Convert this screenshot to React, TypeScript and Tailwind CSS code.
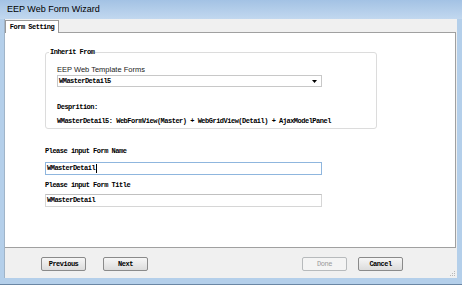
import React from "react";

function Btn({ label, disabled }: { label: string; disabled?: boolean }) {
  return (
    <div
      className={
        "w-[45px] h-[14px] flex items-center justify-center rounded-[2px] border font-['Liberation_Mono',monospace] text-[7px] tracking-[-0.5px] " +
        (disabled
          ? "border-[#b7babc] bg-[#f4f4f4] text-[#9a9a9a]"
          : "border-[#8a8a8a] bg-gradient-to-b from-[#f6f6f6] to-[#dcdcdc] text-black font-bold")
      }
    >
      {label}
    </div>
  );
}

export default function App() {
  return (
    <div className="w-[462px] h-[285px] flex flex-col bg-[#b4cfea] overflow-hidden font-['Liberation_Mono',monospace]">
      {/* title bar */}
      <div className="h-[19px] shrink-0 bg-gradient-to-b from-[#a3c2e4] to-[#c2d8ef] flex items-center pl-[7px] pt-[1px]">
        <span className="font-['Liberation_Sans',sans-serif] text-[9px] text-black">EEP Web Form Wizard</span>
      </div>
      {/* body */}
      <div className="flex-1 ml-[4px] mr-[5px] mb-[6px] bg-[#f0f0f0] border-l border-[#a0b4c8] flex flex-col">
        {/* tab strip */}
        <div className="h-[13px] shrink-0 flex items-end">
          <div className="h-[13px] w-[54px] bg-white border border-b-0 border-[#9a9a9a] flex items-center justify-center text-[7px] tracking-[-0.5px] text-black font-bold relative top-[1px]">
            Form Setting
          </div>
        </div>
        {/* panel */}
        <div className="h-[216px] shrink-0 mr-[1px] bg-white border border-[#a0a0a0] border-l-0 pl-[40px] pt-[19px]">
          {/* group box */}
          <div className="relative w-[332px] h-[77px] border border-[#dcdcdc] rounded-[3px] pl-[11px] pt-[12px]">
            <div className="absolute left-[3px] top-[-5px] bg-white px-[1px] text-[7px] tracking-[-0.5px] font-bold text-black leading-[9px]">
              Inherit From
            </div>
            <div className="font-['Liberation_Sans',sans-serif] text-[7.5px] leading-[9px] text-[#222]">EEP Web Template Forms</div>
            <div className="mt-[1px] w-[265px] h-[12px] border border-[#c8c8c8] flex items-center justify-between pl-[1px] pr-[4px]">
              <span className="text-[7px] tracking-[-0.5px] font-bold text-black">WMasterDetail5</span>
              <svg width="5" height="3" viewBox="0 0 5 3"><path d="M0 0H5L2.5 3Z" fill="#000" /></svg>
            </div>
            <div className="mt-[16px] text-[7px] tracking-[-0.5px] font-bold text-black leading-[9px]">Desprition:</div>
            <div className="mt-[5px] text-[7px] tracking-[-0.5px] font-bold text-black leading-[9px] whitespace-nowrap">
              WMasterDetail5: WebFormView(Master) + WebGridView(Detail) + AjaxModelPanel
            </div>
          </div>
          <div className="mt-[18px] text-[7px] tracking-[-0.5px] font-bold text-black leading-[9px]">Please input Form Name</div>
          <div className="mt-[6px] w-[277px] h-[13px] border border-[#8fb6de] flex items-center pl-[1px]">
            <span className="text-[7px] tracking-[-0.5px] font-bold text-black">WMasterDetail</span>
            <span className="w-px h-[9px] bg-black ml-[1px]" />
          </div>
          <div className="mt-[6px] text-[7px] tracking-[-0.5px] font-bold text-black leading-[9px]">Please input Form Title</div>
          <div className="mt-[4px] w-[277px] h-[13px] border border-[#d6d6d6] border-t-[#c0c0c0] flex items-center pl-[1px]">
            <span className="text-[7px] tracking-[-0.5px] font-bold text-black">WMasterDetail</span>
          </div>
        </div>
        {/* buttons */}
        <div className="flex-1 relative flex items-start pt-[9px] pl-[36px]">
          <Btn label="Previous" />
          <div className="ml-[17px]"><Btn label="Next" /></div>
          <div className="ml-[154px]"><Btn label="Done" disabled /></div>
          <div className="ml-[11px]"><Btn label="Cancel" /></div>
          <svg className="absolute right-[1px] bottom-[1px]" width="6" height="6" viewBox="0 0 6 6">
            <rect x="4" y="0" width="1" height="1" fill="#b8b8b8" />
            <rect x="2" y="2" width="1" height="1" fill="#b8b8b8" />
            <rect x="4" y="2" width="1" height="1" fill="#b8b8b8" />
            <rect x="0" y="4" width="1" height="1" fill="#b8b8b8" />
            <rect x="2" y="4" width="1" height="1" fill="#b8b8b8" />
            <rect x="4" y="4" width="1" height="1" fill="#b8b8b8" />
          </svg>
        </div>
      </div>
      <div className="h-[1px] bg-[#6a86a4] shrink-0" />
    </div>
  );
}
